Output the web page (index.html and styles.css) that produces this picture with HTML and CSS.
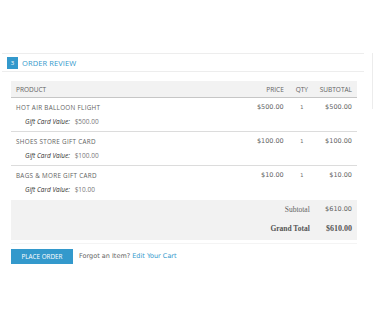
FILE: index.html
```html
<!DOCTYPE html>
<html lang="en">

<head>
    <meta charset="UTF-8">
    <meta name="viewport" content="width=device-width, initial-scale=1.0">
    <title>Order Review</title>
    <link rel="stylesheet" href="styles.css">
</head>

<body>
    <div class="step">
        <div class="step-title">
            <span class="step-number">3</span>
            <span class="step-name">Order Review</span>
        </div>

        <div class="step-body">
            <table class="review-table">
                <thead>
                    <tr>
                        <th class="col-product">Product</th>
                        <th class="col-price">Price</th>
                        <th class="col-qty">Qty</th>
                        <th class="col-subtotal">Subtotal</th>
                    </tr>
                </thead>
                <tbody>
                    <tr>
                        <td class="col-product">
                            <div class="item-name">Hot Air Balloon Flight</div>
                            <div class="item-option"><em>Gift Card Value:</em> $500.00</div>
                        </td>
                        <td class="col-price">$500.00</td>
                        <td class="col-qty">1</td>
                        <td class="col-subtotal">$500.00</td>
                    </tr>
                    <tr>
                        <td class="col-product">
                            <div class="item-name">Shoes Store Gift Card</div>
                            <div class="item-option"><em>Gift Card Value:</em> $100.00</div>
                        </td>
                        <td class="col-price">$100.00</td>
                        <td class="col-qty">1</td>
                        <td class="col-subtotal">$100.00</td>
                    </tr>
                    <tr>
                        <td class="col-product">
                            <div class="item-name">Bags &amp; More Gift Card</div>
                            <div class="item-option"><em>Gift Card Value:</em> $10.00</div>
                        </td>
                        <td class="col-price">$10.00</td>
                        <td class="col-qty">1</td>
                        <td class="col-subtotal">$10.00</td>
                    </tr>
                </tbody>
                <tfoot>
                    <tr class="first">
                        <td colspan="3" class="total-label">Subtotal</td>
                        <td class="total-value">$610.00</td>
                    </tr>
                    <tr class="last">
                        <td colspan="3" class="total-label"><strong>Grand Total</strong></td>
                        <td class="total-value"><strong>$610.00</strong></td>
                    </tr>
                </tfoot>
            </table>
            <div class="table-end"></div>

            <div class="buttons-set">
                <button type="button" class="btn-checkout">Place Order</button>
                <span class="forgot">Forgot an Item? <a href="#">Edit Your Cart</a></span>
            </div>
        </div>
        <div class="side-line"></div>
    </div>
</body>

</html>
```

FILE: styles.css
```css
body {
    font-family: "Open Sans", sans-serif;
    background-color: #fff;
    color: #636363;
    margin: 0;
    padding: 53px 0 0 2px;
}

.step {
    position: relative;
    width: 362px;
}

.step-title {
    display: flex;
    align-items: center;
    height: 17px;
    border-top: 1px solid #ededed;
    border-bottom: 1px solid #ededed;
    padding-left: 5px;
}

.step-number {
    width: 11px;
    height: 12px;
    background-color: #3399cc;
    color: #fff;
    font-size: 6px;
    line-height: 12px;
    text-align: center;
}

.step-name {
    margin-left: 4px;
    color: #3399cc;
    font-size: 7.5px;
    text-transform: uppercase;
    letter-spacing: 0.1px;
}

.step-body {
    padding: 9px 7px 0 9px;
}

.review-table {
    width: 346px;
    border-collapse: collapse;
}

.review-table th {
    height: 16px;
    padding: 0 5px;
    background-color: #f2f2f2;
    border-bottom: 1px solid #c6c6c6;
    font-size: 6.5px;
    font-weight: normal;
    text-transform: uppercase;
    color: #636363;
}

.review-table td {
    padding: 0 5px;
    vertical-align: top;
    box-sizing: border-box;
}

.review-table tbody td {
    height: 34px;
    border-bottom: 1px solid #dcdcdc;
}

.review-table tbody tr:last-child td {
    border-bottom: none;
}

.col-product {
    text-align: left;
}

.col-price {
    width: 36px;
    text-align: right;
}

.col-qty {
    width: 16px;
    text-align: center;
}

.col-subtotal {
    width: 32px;
    text-align: right;
}

.review-table tbody .col-price,
.review-table tbody .col-qty,
.review-table tbody .col-subtotal {
    padding-top: 5px;
    font-family: "DejaVu Sans", Verdana, sans-serif;
    font-size: 6.5px;
    color: #666;
}

.review-table tbody .col-qty {
    font-size: 5px;
    padding-top: 6px;
}

.item-name {
    padding-top: 5px;
    font-size: 6.3px;
    text-transform: uppercase;
    letter-spacing: 0.3px;
    color: #636363;
}

.item-option {
    padding: 5px 0 0 9px;
    font-size: 6.5px;
    color: #777;
}

.item-option em {
    margin-right: 3px;
    color: #333;
}

.review-table tfoot tr {
    background-color: #f2f2f2;
}

.review-table tfoot td {
    height: 20px;
}

.review-table tfoot tr.first td {
    padding-top: 5px;
}

.review-table tfoot tr.last td {
    padding-top: 4px;
}

.total-label,
.total-value {
    font-family: "Liberation Serif", "Times New Roman", serif;
    font-size: 7.5px;
    color: #636363;
    text-align: right;
}

.total-label {
    padding-right: 5px;
}

.total-value {
    font-family: "DejaVu Sans", Verdana, sans-serif;
    font-size: 6.5px;
}

.review-table tfoot tr.last .total-label {
    font-size: 7.5px;
    color: #555;
}

.review-table tfoot tr.last .total-value {
    font-family: "Liberation Serif", serif;
    font-size: 8px;
    color: #555;
}

.table-end {
    height: 1px;
    margin-top: 3px;
    background-color: #f4f4f4;
}

.buttons-set {
    display: flex;
    align-items: center;
    margin-top: 5px;
}

.btn-checkout {
    width: 62px;
    height: 15px;
    padding: 0;
    background-color: #3399cc;
    color: #fff;
    border: none;
    font-family: "Open Sans", sans-serif;
    font-size: 6.3px;
    text-transform: uppercase;
    cursor: pointer;
}

.forgot {
    margin-left: 6px;
    font-family: "DejaVu Sans", Verdana, sans-serif;
    font-size: 6.5px;
    color: #636363;
}

.forgot a {
    color: #3399cc;
    text-decoration: none;
}

.side-line {
    position: absolute;
    top: 0;
    right: -9px;
    width: 1px;
    height: 56px;
    background-color: #ececec;
}
```
